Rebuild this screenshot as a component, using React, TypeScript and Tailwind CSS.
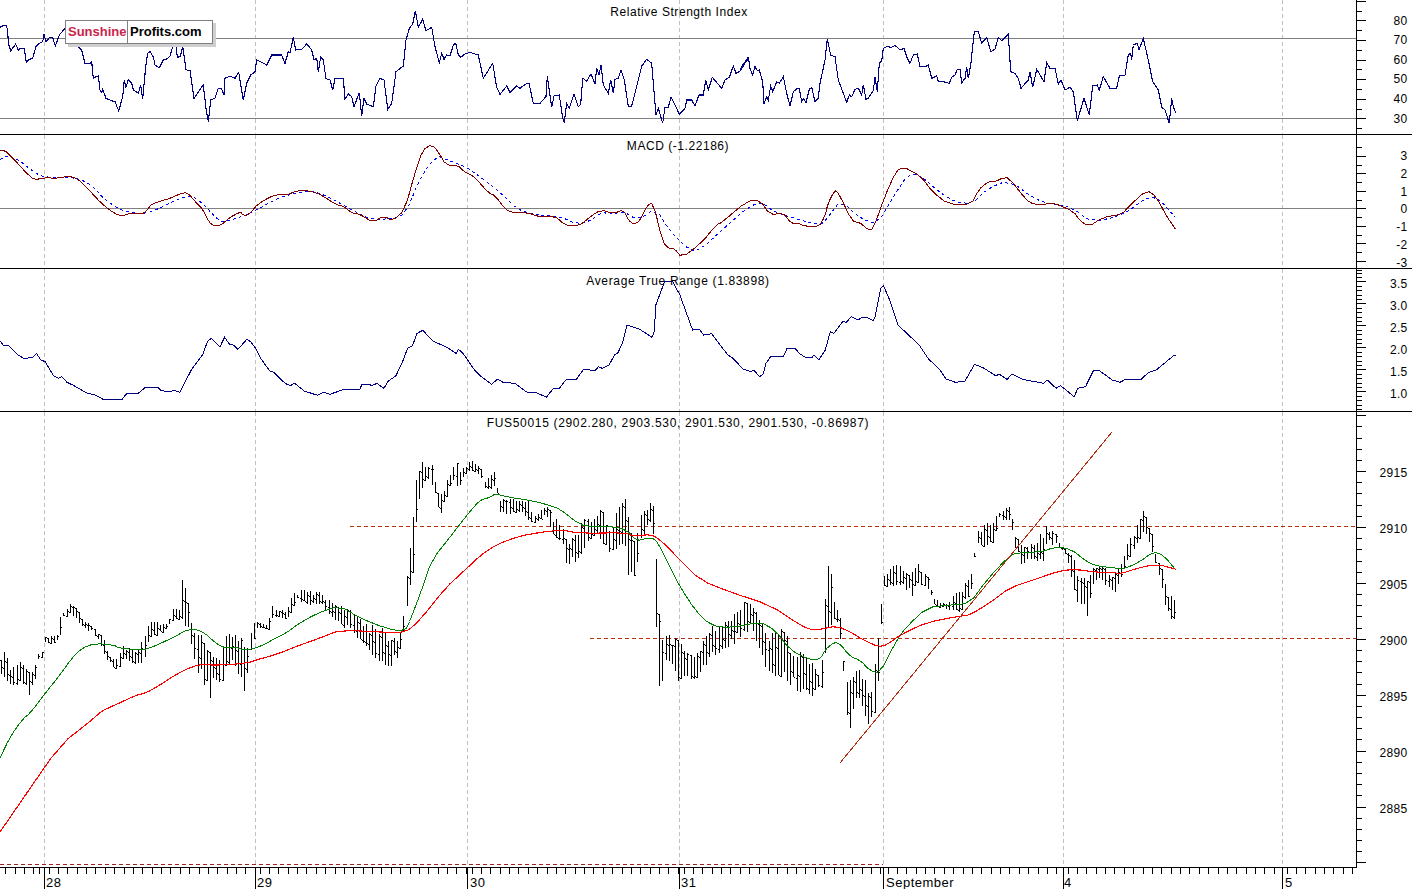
type Pt = [number, number];

// points were read off zoomed crops, so each run keeps its crop offset and scale
const crop = (ox: number, oy: number, kx: number, ky: number, s: string): Pt[] =>
  s.trim().split(/\s+/).map((p) => {
    const [x, y] = p.split(',').map(Number);
    return [ox + x / kx, oy + y / ky] as Pt;
  });
const before = (pts: Pt[], x: number) => pts.filter((p) => p[0] < x);
const line = (pts: Pt[]) => pts.map(([x, y]) => `${x.toFixed(1)},${y.toFixed(1)}`).join(' ');

// corner cutting, the moving averages are curves in the chart
const smooth = (pts: Pt[]) => {
  const out: Pt[] = [pts[0]];
  for (let i = 0; i < pts.length - 1; i++) {
    const [x0, y0] = pts[i];
    const [x1, y1] = pts[i + 1];
    out.push([x0 * 0.75 + x1 * 0.25, y0 * 0.75 + y1 * 0.25], [x0 * 0.25 + x1 * 0.75, y0 * 0.25 + y1 * 0.75]);
  }
  out.push(pts[pts.length - 1]);
  return out;
};

const K = 1568 / 600;

const rsi: Pt[] = [
  ...before(crop(0, 0, 3, 3, '0,82 12,76 20,76 24,110 25,130 32,152 40,142 47,132 55,150 62,145 73,146 79,186 85,180 98,174 108,140 118,130 128,125 132,103 138,125 148,113 158,113 166,138 178,105 195,85 210,80 225,90 235,140 245,150 255,190 270,190 275,185 280,235 288,230 295,228 300,270 305,278 308,268 318,295 335,302 345,305 356,333 368,290 373,240 378,262 385,238 395,250 400,270 415,280 422,255 428,298 437,200 443,160 450,155 460,170 465,195 478,203 490,180 500,177 510,168 518,140 525,110 532,172 541,170 548,140 558,208 563,212 570,212 582,295 600,268 610,255 618,325 625,365 632,300 645,295 655,265 664,265 672,285 675,235 690,228 705,235 716,217 730,300 740,250 752,225 765,215 770,180 785,187 800,195 815,165 845,165 855,190 865,155'), 290),
  ...crop(290, 0, 3, 3, '0,158 10,112 17,150 35,148 50,132 65,150 72,180 80,175 85,215 92,170 100,180 108,236 120,240 128,270 135,235 150,235 160,235 165,297 175,282 185,290 192,320 208,278 215,348 222,295 230,312 250,320 258,258 270,235 282,240 293,328 305,310 318,215 340,198 348,120 358,85 368,72 376,32 385,82 398,58 408,92 425,82 435,140 448,188 455,160 462,178 470,165 480,168 490,135 497,130 505,165 512,172 525,162 540,157 565,165 580,235 608,190 620,262 630,283 650,258 660,278 680,258 690,265 710,250 717,250 730,310 750,310 768,290 772,228 785,322 792,288 808,285 818,355 823,368 830,310 838,325 852,282 865,320 872,312 878,235 890,243 903,222 915,252 920,205 927,225 933,195 940,255 955,280 962,240 970,280 975,238 985,235 993,210 1003,240 1015,320 1025,318 1045,240 1055,198 1070,178 1085,190 1098,345 1105,325 1118,370 1125,322 1135,322 1143,292 1155,315 1168,342 1185,325 1190,300 1205,300 1215,317 1227,285 1240,285 1247,240 1255,270 1267,232 1295,265 1305,240 1318,232 1330,198 1338,220 1352,212 1375,170'),
  ...crop(740, 0, 3, 3, '0,212 8,195 22,180 25,170 30,205 38,225 45,200 52,212 58,210 68,245 72,312 80,290 85,300 92,258 98,275 110,245 118,250 130,230 140,280 150,318 160,275 172,265 178,265 185,305 190,295 198,308 208,268 215,262 225,305 235,295 240,250 255,180 262,118 272,165 285,170 295,240 320,307 328,285 335,290 345,268 355,265 365,285 370,255 378,298 385,295 400,272 405,232 412,275 418,190 425,182 430,145 440,140 455,142 465,136 480,150 492,145 500,170 510,190 520,165 532,162 540,200 555,200 565,195 575,235 590,228 595,245 610,245 628,250 635,232 645,225 652,208 660,208 665,248 675,235 680,202 685,235 692,195 703,95 715,95 725,130 740,112 752,155 765,148 775,112 785,122 795,112 805,103 812,215 825,220 835,235 843,265 865,240 870,215 878,262 890,208 912,245 920,188 930,205 945,205 955,252 963,240 975,270 990,262 1000,275 1012,362 1032,295 1048,345 1058,258 1072,255 1078,270 1090,230 1110,265 1130,265 1138,228 1155,225 1165,165 1172,160 1175,180 1180,135 1192,130 1197,150 1210,115 1225,180 1238,245 1255,270 1265,322 1275,330 1288,370 1295,295 1300,320 1308,340'),
];

const macd: Pt[] = smooth([
  ...before(crop(0, 135, K, 3, '0,48 12,46 30,65 50,90 70,115 90,135 115,128 150,130 175,124 200,128 235,168 265,205 290,228 310,241 325,241 340,234 370,238 385,225 395,208 420,198 445,190 480,172 495,178 510,200 530,222 545,260 560,273 578,270 600,248 628,230 635,240 650,240 675,205 720,178 750,180 775,167 810,167 840,180 880,210 895,212 920,234 940,237 975,263 1003,242 1025,258 1058,225 1085,110 1105,45 1128,28 1145,50 1165,90 1195,90 1215,112 1240,125 1275,172 1295,183 1320,222 1340,233 1380,233 1410,246 1450,243 1475,268 1495,274 1520,268 1545,245 1568,228'), 590),
  ...crop(590, 135, K, 3, '0,245 30,224 60,236 88,224 100,255 115,268 130,258 150,210 165,203 190,320 205,340 220,340 240,368 290,325 330,270 345,262 410,198 445,196 470,240 505,233 525,265 545,265 560,273 598,277 615,240 622,205 640,165 650,175 685,260 705,262 725,283 740,283 770,185 800,108 820,97 835,105 865,125 895,170 935,207 995,210 1015,165 1040,140 1060,140 1075,130 1095,128 1140,195 1160,208 1190,208 1210,203 1265,230 1280,258 1305,274 1340,247 1390,238 1410,212 1455,165 1480,185 1505,240 1530,283'),
]);

const signal: Pt[] = smooth([
  ...before(crop(0, 135, K, 3, '0,75 15,60 45,72 90,112 110,125 150,128 200,128 240,150 270,190 310,222 340,232 380,237 420,218 470,190 500,182 530,205 565,250 585,262 640,242 670,225 725,190 770,175 810,168 850,180 920,225 970,255 1030,250 1060,235 1100,125 1140,62 1170,75 1220,97 1260,130 1310,175 1350,222 1400,240 1460,243 1510,268 1545,258 1568,245'), 590),
  ...crop(590, 135, K, 3, '0,258 30,232 60,238 85,228 125,256 172,220 210,290 260,347 290,343 350,280 420,210 455,205 480,230 530,248 600,272 620,250 655,195 700,245 750,270 790,190 830,120 860,118 920,178 960,203 1000,205 1040,160 1095,135 1165,195 1220,210 1260,218 1310,262 1390,242 1460,183 1490,195 1530,247'),
]);

const atr: Pt[] = [
  ...before(crop(0, 135, K, 3, '0,618 10,632 22,632 45,658 62,670 85,668 95,655 107,675 118,680 140,722 152,730 162,725 175,742 190,750 230,776 245,778 268,792 320,792 330,777 360,776 380,757 412,757 420,766 440,771 455,766 470,772 500,705 530,658 542,620 552,610 575,635 587,607 600,628 610,630 622,643 645,613 655,620 668,640 680,668 705,708 715,712 745,745 758,752 770,745 795,768 830,781 845,772 862,778 900,763 940,765 945,750 965,748 972,752 985,745 1003,760 1015,738 1035,722 1055,672 1065,640 1078,632 1090,595 1105,586 1130,617 1150,628 1165,635 1192,655 1198,643 1210,655 1240,705 1255,722 1285,748 1300,733 1315,742 1345,745 1380,774 1400,772 1428,787 1445,762 1462,760 1480,733 1505,735 1525,703 1550,703 1562,695 1568,705'), 590),
  ...crop(590, 135, K, 3, '0,705 15,705 22,695 32,700 50,690 65,658 72,655 85,625 97,570 130,583 162,607 168,590 172,510 195,440 215,438 235,480 268,585 285,582 297,600 318,596 360,660 372,668 400,702 420,710 428,705 443,725 452,718 460,685 473,663 505,665 515,640 535,640 550,658 565,668 580,668 585,660 598,675 615,645 628,590 637,595 660,560 670,562 682,545 700,555 710,548 725,548 740,557 745,545 760,460 767,452 785,500 805,570 860,630 885,672 915,705 930,732 955,742 980,738 1005,688 1030,700 1060,722 1070,718 1090,733 1103,717 1130,733 1185,745 1195,735 1218,760 1230,752 1265,785 1275,760 1295,755 1315,708 1330,706 1365,735 1385,742 1400,733 1440,733 1460,712 1480,705 1525,662 1530,662'),
];

const emaFast: Pt[] = smooth([
  [0, 758], [10, 737],
  ...crop(0, 560, 3, 3, '67,478 90,460 135,400 180,345 215,295 245,265 285,250 340,255 360,265 430,270 465,258 520,232 570,205 610,215 650,252 680,265 700,260 735,270 765,265 800,250 825,235 860,218 900,188'),
  [320, 612], [340, 606], [360, 618], [385, 628], [405, 632], [411, 618],
  ...crop(380, 410, 3, 3, '125,540 155,450 215,375 265,310 300,270 330,262 345,252 390,262 455,272 505,285 540,297 600,345 640,350 700,350 740,360 770,393 800,385 825,385 850,430 880,490 900,530'),
  [695, 610], [710, 625], [730, 628], [760, 622], [775, 630], [790, 650], [810, 660],
  ...crop(820, 500, 3, 3, '0,478 15,450 40,428 60,430 90,470 120,480 150,512 180,520 230,420 260,380 320,323 390,315 450,310 500,240 570,165 600,158 670,155 700,142 750,145 800,185 830,198 880,203 910,208 960,185 1000,155 1030,165 1068,210'),
]);

const emaSlow: Pt[] = smooth([
  [0, 832], [22, 800], [60, 745],
  ...crop(0, 560, 3, 3, '275,480 305,453 345,435 410,405 435,400 480,375 525,345 575,320 610,313 650,316 740,310 775,298 830,283 900,255'),
  [320, 638], [340, 630], [380, 632], [405, 633], [420, 620],
  ...crop(380, 410, 3, 3, '195,535 255,480 300,437 350,403 420,378 480,367 545,360 600,370 740,368 760,380 815,372 850,398 900,450'),
  [700, 580], [730, 592], [770, 605], [800, 625], [812, 630],
  ...crop(820, 500, 3, 3, '0,388 50,378 90,395 130,420 175,440 200,435 240,405 320,367 420,348 450,345 510,308 570,263 640,240 720,212 770,208 830,217 880,217 900,222 950,205 1010,192 1068,208'),
]);

const highs: Pt[] = [
  ...crop(0, 560, 3, 3, '0,310 10,270 25,290 30,330 45,310 65,305 75,320 105,320 115,275 128,275 135,230 175,225 180,160 195,155 212,128 235,155 250,185 280,190 290,215 315,240 325,280 350,295 370,255 410,270 440,215 450,185 500,190 520,145 545,150 548,42 570,150 585,225 610,225 620,265 640,290 660,295 682,220 722,225 735,265 748,235 765,185 805,195 815,135 860,155 880,85 895,105'),
  [300, 590], [320, 592], [330, 600], [350, 610], [370, 625], [378, 622], [392, 640], [402, 630],
  ...before(crop(380, 410, 3, 3, '80,520 85,420 100,330 108,195 120,155 160,165 170,240 190,240 215,180 230,120 240,180 275,150 305,175 315,210 350,180 355,270 400,265 445,270 460,320 500,285 520,320 545,330 560,390 585,380 605,320 640,330 665,295 690,365 725,265 740,265 760,400 795,275 820,275'), 655),
  [655, 535], [658, 580], [662, 630], [680, 640], [690, 655], [700, 650], [710, 625], [730, 620], [745, 600], [750, 598], [760, 620], [770, 630], [780, 625], [790, 640], [800, 650], [815, 665],
  ...crop(820, 500, 3, 3, '0,530 10,425 20,210 32,185 40,290 62,350 70,480 85,545 115,500 135,525 150,600 170,470 185,305 190,235 205,205 235,190 260,215 295,190 330,240 340,295 380,310 410,275 440,240 460,210 468,92 500,72 530,35 575,15 580,95 600,125 640,130 655,110 680,75 715,105 720,135 750,155 765,175 775,235 800,230 825,195 860,200 880,225 905,190 920,130 945,95 970,30 985,70 1000,100 1005,160 1025,190 1040,270 1068,300'),
];

const lows: Pt[] = [
  ...crop(0, 560, 3, 3, '0,345 25,370 40,375 60,375 90,410 105,375 115,300 130,250 165,248 180,235 190,170 210,160 240,190 255,205 285,225 305,260 325,310 355,335 370,295 430,325 440,275 450,225 480,225 520,180 545,180 555,235 570,230 585,310 600,350 620,390 630,435 640,355 670,375 675,320 700,310 740,410 745,300 760,255 770,205 810,205 815,175 860,180 880,145 895,115'),
  [300, 605], [320, 605], [340, 625], [360, 640], [375, 658], [390, 668], [400, 655],
  ...before(crop(380, 410, 3, 3, '80,620 90,570 105,480 115,300 125,240 150,200 170,270 182,317 195,280 215,210 240,240 255,190 290,180 315,240 350,240 360,315 420,310 460,340 500,320 520,375 545,400 560,465 600,450 620,400 650,370 695,450 730,400 745,530 770,490 780,420 800,360 820,360'), 656),
  [657, 665], [660, 690], [670, 660], [680, 685], [695, 680], [710, 660], [725, 650], [740, 640], [752, 628], [760, 660], [770, 675], [785, 680], [795, 690], [815, 697],
  ...crop(820, 500, 3, 3, '0,570 10,570 20,400 50,350 60,430 70,515 80,655 90,700 110,590 135,630 140,690 170,630 180,470 190,260 215,260 250,255 275,295 300,260 330,270 345,320 390,330 425,340 440,310 455,280 465,130 490,135 525,135 535,60 575,60 580,125 605,195 625,185 670,185 680,130 715,140 740,165 770,305 805,360 815,260 840,240 885,280 905,235 920,190 940,155 975,90 1000,165 1020,235 1030,290 1045,350 1072,368'),
];

const interp = (pts: Pt[], x: number) => {
  for (let i = 1; i < pts.length; i++) {
    if (x <= pts[i][0]) {
      const [x0, y0] = pts[i - 1];
      const [x1, y1] = pts[i];
      return x1 === x0 ? y1 : y0 + ((y1 - y0) * (x - x0)) / (x1 - x0);
    }
  }
  return pts[pts.length - 1][1];
};

const noise = (n: number) => {
  const v = Math.sin(n * 12.9898) * 43758.5453;
  return v - Math.floor(v);
};

// one price bar per 3.12px; each opens near the last close so the bars step like the chart
const barsPath = () => {
  let d = '';
  let prev = 660;
  for (let i = 0; i * 3.12 + 1 < 1177; i++) {
    const x = Math.round(i * 3.12 + 1) + 0.5;
    const hi = interp(highs, x);
    const lo = Math.max(interp(lows, x), hi + 4);
    const span = lo - hi;
    let top = Math.round(hi + noise(i + 1) ** 2 * span * 0.3);
    let bot = Math.round(lo - noise(i + 500) ** 2 * span * 0.3);
    const open = Math.round(prev) + 0.5;
    const close = Math.round(top + noise(i + 1300) * (bot - top)) + 0.5;
    if (open > hi - 2 && open < lo + 2) {
      top = Math.min(top, Math.floor(open));
      bot = Math.max(bot, Math.ceil(open));
      d += `M${x - 1.5} ${open}H${x}`;
    }
    d += `M${x} ${top}V${bot}M${x} ${close}H${x + 1.5}`;
    prev = close;
  }
  return d;
};

const grid = [44, 255, 467, 679, 883, 1063, 1282];

function GridLines({ y1, y2 }: { y1: number; y2: number }) {
  return (
    <>
      {grid.map((x) => (
        <line key={x} x1={x + 0.5} x2={x + 0.5} y1={y1} y2={y2} stroke="#c0c0c0" strokeDasharray="4 3" />
      ))}
    </>
  );
}

function Axis({
  top,
  height,
  long,
  short,
  labels,
}: {
  top: number;
  height: number;
  long: number[];
  short: number[];
  labels: [string, number][];
}) {
  return (
    <div className="w-[56px] border-l border-black">
      <svg width={55} height={height} viewBox={`1357 ${top} 55 ${height}`} shapeRendering="crispEdges" className="block overflow-visible">
        {long.map((y) => (
          <line key={y} x1={1357} x2={1366} y1={Math.round(y) + 0.5} y2={Math.round(y) + 0.5} stroke="#000" />
        ))}
        {short.map((y) => (
          <line key={y} x1={1357} x2={1362} y1={Math.round(y) + 0.5} y2={Math.round(y) + 0.5} stroke="#000" />
        ))}
        {labels.map(([t, y]) => (
          <text key={t} x={1407.5} y={y} textAnchor="end" shapeRendering="auto" className="font-['Liberation_Sans'] text-[12px] tracking-[0.3px]" fill="#000">
            {t}
          </text>
        ))}
      </svg>
    </div>
  );
}

const range = (n: number, f: (i: number) => number) => Array.from({ length: n }, (_, i) => f(i));

function Title({ children, className }: { children: string; className: string }) {
  return (
    <div className={`absolute inset-x-0 text-center font-['Liberation_Sans'] text-[12px] leading-[14px] text-black ${className}`}>
      {children}
    </div>
  );
}

function Logo() {
  return (
    <div className="absolute left-[65px] top-[20px] flex h-[24px] w-[148px] border border-[#808080] bg-white font-['Liberation_Sans'] text-[13px] font-bold leading-[22px] shadow-[3px_3px_0_#cfcfcf]">
      <div className="w-[62px] border-r border-[#808080] pl-[2px] text-[#c9264b]">Sunshine</div>
      <div className="flex-1 bg-[radial-gradient(#d5ecd5_0.6px,transparent_0.6px)] bg-[length:4px_4px] pl-[2px] text-black">Profits.com</div>
    </div>
  );
}

const days: [string, number, number][] = [
  ['28', 44, 46],
  ['29', 255, 257],
  ['30', 467, 470],
  ['31', 679, 681],
  ['September', 883, 886],
  ['4', 1063, 1064],
  ['5', 1282, 1285],
];

const axisTicks = [
  5, 15, 24, 33, 39,
  ...days.flatMap(([, x], i) => {
    const end = i + 1 < days.length ? days[i + 1][1] : 1356;
    const out: number[] = [];
    for (let t = x + 4.6; t < end - 1; t += 9.37) out.push(t);
    return out;
  }),
];

export default function App() {
  return (
    <div className="flex h-[889px] w-[1412px] flex-col overflow-hidden bg-white">
      <div className="flex h-[135px] border-b border-black">
        <div className="relative w-[1356px]">
          <svg width={1356} height={134} viewBox="0 0 1356 134" className="block" shapeRendering="crispEdges">
            <GridLines y1={0} y2={134} />
            <line x1={0} x2={1356} y1={38.5} y2={38.5} stroke="#808080" />
            <line x1={0} x2={1356} y1={118.5} y2={118.5} stroke="#808080" />
            <polyline points={line(rsi)} fill="none" stroke="#000080" strokeWidth={1.1} />
          </svg>
          <Title className="top-[5px] pl-[2px] tracking-[0.55px]">Relative Strength Index</Title>
          <Logo />
        </div>
        <Axis
          top={0}
          height={134}
          long={range(7, (i) => 0.7 + 19.6 * i)}
          short={range(7, (i) => 10.5 + 19.6 * i)}
          labels={[['80', 25], ['70', 44], ['60', 64], ['50', 83], ['40', 103], ['30', 123]]}
        />
      </div>

      <div className="flex h-[134px] border-b border-black">
        <div className="relative w-[1356px]">
          <svg width={1356} height={133} viewBox="0 135 1356 133" className="block" shapeRendering="crispEdges">
            <GridLines y1={135} y2={268} />
            <line x1={0} x2={1356} y1={208.5} y2={208.5} stroke="#808080" />
            <polyline points={line(signal)} fill="none" stroke="#0000ff" strokeDasharray="3 3" />
            <polyline points={line(macd)} fill="none" stroke="#800000" />
          </svg>
          <Title className="top-[4px] tracking-[0.55px]">MACD (-1.22186)</Title>
        </div>
        <Axis
          top={135}
          height={133}
          long={range(7, (i) => 155.8 + 17.5 * i)}
          short={range(8, (i) => 147 + 17.5 * i)}
          labels={[['3', 160], ['2', 178], ['1', 196], ['0', 213], ['-1', 231], ['-2', 249], ['-3', 267]]}
        />
      </div>

      <div className="flex h-[143px] border-b border-black">
        <div className="relative w-[1356px]">
          <svg width={1356} height={142} viewBox="0 269 1356 142" className="block" shapeRendering="crispEdges">
            <GridLines y1={269} y2={411} />
            <polyline points={line(atr)} fill="none" stroke="#000080" />
          </svg>
          <Title className="top-[5px] tracking-[0.65px]">Average True Range (1.83898)</Title>
        </div>
        <Axis
          top={269}
          height={142}
          long={range(6, (i) => 281.3 + 22 * i)}
          short={range(32, (i) => 272.5 + 4.4 * i).filter((y) => (y - 281.3) % 22 > 1 && (y - 281.3) % 22 < 21 || y < 281)}
          labels={[['3.5', 288], ['3.0', 310], ['2.5', 332], ['2.0', 354], ['1.5', 376], ['1.0', 398]]}
        />
      </div>

      <div className="flex h-[456px]">
        <div className="relative h-full w-[1356px] border-b border-black">
          <svg width={1356} height={455} viewBox="0 412 1356 455" className="block" shapeRendering="crispEdges">
            <GridLines y1={412} y2={864} />
            <line x1={350} x2={1356} y1={526.5} y2={526.5} stroke="#b5300f" strokeDasharray="4 3" />
            <line x1={590} x2={1356} y1={638.5} y2={638.5} stroke="#b5300f" strokeDasharray="4 3" />
            <line x1={0} x2={883} y1={864.5} y2={864.5} stroke="#a02020" strokeDasharray="4 3" />
            <path d={barsPath()} fill="none" stroke="#000" />
            <polyline points={line(emaFast)} fill="none" stroke="#008000" />
            <polyline points={line(emaSlow)} fill="none" stroke="#ff0000" strokeWidth={1.15} />
            <line x1={840} y1={763} x2={1112} y2={432} stroke="#b5300f" />
          </svg>
          <Title className="top-[4px] tracking-[0.67px]">FUS50015 (2902.280, 2903.530, 2901.530, 2901.530, -0.86987)</Title>
        </div>
        <Axis
          top={412}
          height={456}
          long={range(9, (i) => 415.2 + 55.9 * i)}
          short={range(40, (i) => 415.2 + 11.18 * i).filter((_, i) => i % 5 !== 0)}
          labels={[['2915', 477], ['2910', 533], ['2905', 589], ['2900', 645], ['2895', 701], ['2890', 757], ['2885', 813]]}
        />
      </div>

      <div className="h-[21px]">
        <svg width={1412} height={21} viewBox="0 868 1412 21" className="block">
          <g shapeRendering="crispEdges">
            {axisTicks.map((x) => (
              <line key={x} x1={Math.round(x) + 0.5} x2={Math.round(x) + 0.5} y1={868} y2={874} stroke="#000" />
            ))}
            {days.map(([t, x]) => (
              <line key={t} x1={x + 0.5} x2={x + 0.5} y1={868} y2={889} stroke="#000" />
            ))}
          </g>
          {days.map(([t, , lx]) => (
            <text key={t} x={lx} y={887} className="font-['Liberation_Sans'] text-[13px] tracking-[0.5px]" fill="#000">
              {t}
            </text>
          ))}
        </svg>
      </div>
    </div>
  );
}
